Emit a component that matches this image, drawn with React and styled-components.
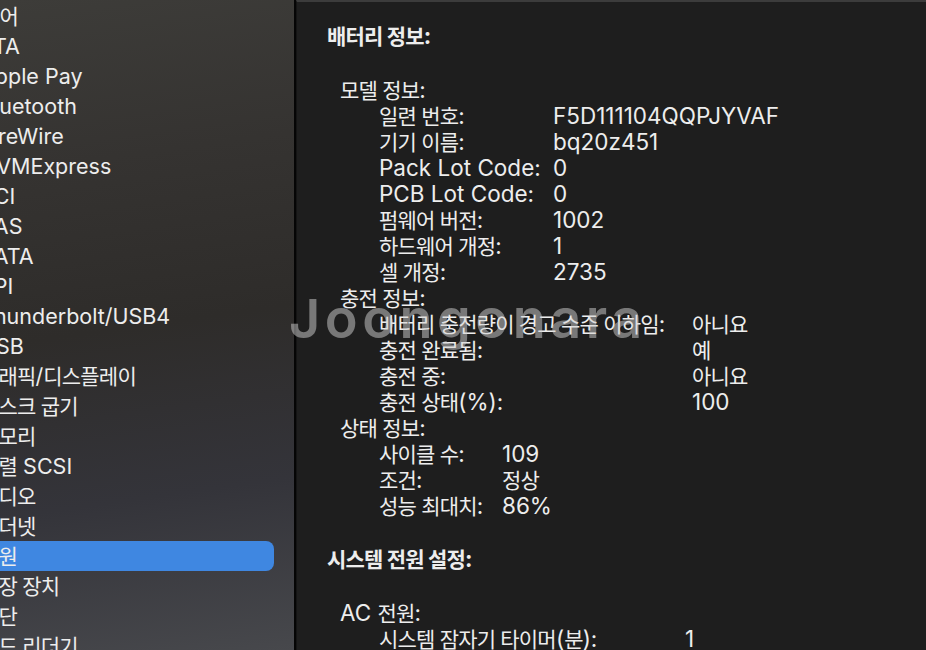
import React from "react";
import styled, { createGlobalStyle } from "styled-components";

const GlobalStyle = createGlobalStyle`
  html, body { margin: 0; padding: 0; background: #1e1e1e; }
  body { font-family: Inter, "Noto Sans CJK KR", sans-serif; -webkit-font-smoothing: antialiased; }
  * { box-sizing: border-box; }
`;

const Screen = styled.div`
  position: relative;
  display: flex;
  width: 926px;
  height: 650px;
  overflow: hidden;
  font-family: Inter, "Noto Sans CJK KR", sans-serif;
`;

/* Hangul runs: larger glyphs on a tighter advance, as in the macOS Korean font */
const Hangul = styled.span`
  font-size: 21px;
  letter-spacing: -0.8px;
`;

const HANGUL_RUN = /([\u1100-\u11FF\u3130-\u318F\uAC00-\uD7A3]+(?:\s+[\u1100-\u11FF\u3130-\u318F\uAC00-\uD7A3]+)*)/;

function Mixed({ text }) {
  return text
    .split(HANGUL_RUN)
    .map((part, i) => (i % 2 ? <Hangul key={i}>{part}</Hangul> : part));
}

const Sidebar = styled.nav`
  flex: 0 0 296px;
  padding: 1px 20px 0 0;
  overflow: hidden;
  background: linear-gradient(172deg, #3d3c39 0%, #353331 25%, #2e2c2a 50%, #34343a 75%, #47484c 100%);
  border-right: 2px solid #050505;
`;

const SideList = styled.ul`
  list-style: none;
  margin: 0 0 0 -70px;
  padding: 0;
`;

const SideItem = styled.li`
  height: 30px;
  line-height: 30px;
  font-size: 21.5px;
  color: #ededed;
  white-space: nowrap;
  overflow: hidden;
  padding-left: ${(p) => (p.$header ? 14 : 50)}px;
  border-radius: 8px;
  background: ${(p) => (p.$selected ? "#3f87e1" : "transparent")};
`;

const Panel = styled.main`
  flex: 1;
  background: #1e1e1e;
  border-top: 2px solid #3c3c3c;
  border-left: 1px solid #141414;
  padding: 22px 0 0 30px;
  color: #ededed;
  font-size: 22.5px;
  line-height: 26px;
`;

const Section = styled.section`
  & + & { margin-top: 28px; }
`;

const SectionTitle = styled.h2`
  height: 26px;
  margin: -1px 0 28px;
  font-size: 22.5px;
  font-weight: 700;
  line-height: 26px;
  white-space: nowrap;
`;

const Group = styled.div`
  padding-left: 13px;
`;

const GroupTitle = styled.div`
  height: 26px;
  white-space: nowrap;
`;

const Rows = styled.dl`
  display: grid;
  grid-template-columns: ${(p) => p.$labelWidth}px auto;
  grid-auto-rows: 26px;
  margin: 0;
  padding-left: 39px;
`;

const Label = styled.dt`
  white-space: nowrap;
`;

const Value = styled.dd`
  margin: 0;
  white-space: nowrap;
`;

const Watermark = styled.div`
  position: absolute;
  left: 289px;
  top: 292px;
  font-family: Inter, sans-serif;
  font-size: 54px;
  font-weight: 600;
  letter-spacing: 4.5px;
  line-height: 1;
  color: rgba(210, 210, 210, 0.5);
  pointer-events: none;
`;

const sidebarItems = [
  { name: "하드웨어", header: true },
  { name: "ATA" },
  { name: "Apple Pay" },
  { name: "Bluetooth" },
  { name: "FireWire" },
  { name: "NVMExpress" },
  { name: "PCI" },
  { name: "SAS" },
  { name: "SATA" },
  { name: "SPI" },
  { name: "Thunderbolt/USB4" },
  { name: "USB" },
  { name: "그래픽/디스플레이" },
  { name: "디스크 굽기" },
  { name: "메모리" },
  { name: "병렬 SCSI" },
  { name: "오디오" },
  { name: "이더넷" },
  { name: "전원", selected: true },
  { name: "저장 장치" },
  { name: "진단" },
  { name: "카드 리더기" },
];

const sections = [
  {
    title: "배터리 정보:",
    groups: [
      {
        title: "모델 정보:",
        labelWidth: 174,
        rows: [
          ["일련 번호:", "F5D111104QQPJYVAF"],
          ["기기 이름:", "bq20z451"],
          ["Pack Lot Code:", "0"],
          ["PCB Lot Code:", "0"],
          ["펌웨어 버전:", "1002"],
          ["하드웨어 개정:", "1"],
          ["셀 개정:", "2735"],
        ],
      },
      {
        title: "충전 정보:",
        labelWidth: 313,
        rows: [
          ["배터리 충전량이 경고 수준 이하임:", "아니요"],
          ["충전 완료됨:", "예"],
          ["충전 중:", "아니요"],
          ["충전 상태(%):", "100"],
        ],
      },
      {
        title: "상태 정보:",
        labelWidth: 123,
        rows: [
          ["사이클 수:", "109"],
          ["조건:", "정상"],
          ["성능 최대치:", "86%"],
        ],
      },
    ],
  },
  {
    title: "시스템 전원 설정:",
    groups: [
      {
        title: "AC 전원:",
        labelWidth: 306,
        rows: [["시스템 잠자기 타이머(분):", "1"]],
      },
    ],
  },
];

export default function App() {
  return (
    <>
      <GlobalStyle />
      <Screen>
        <Sidebar>
          <SideList>
            {sidebarItems.map((it) => (
              <SideItem key={it.name} $header={it.header} $selected={it.selected}>
                <Mixed text={it.name} />
              </SideItem>
            ))}
          </SideList>
        </Sidebar>
        <Panel>
          {sections.map((s) => (
            <Section key={s.title}>
              <SectionTitle>
                <Mixed text={s.title} />
              </SectionTitle>
              {s.groups.map((g) => (
                <Group key={g.title}>
                  <GroupTitle>
                    <Mixed text={g.title} />
                  </GroupTitle>
                  <Rows $labelWidth={g.labelWidth}>
                    {g.rows.map(([l, v]) => (
                      <React.Fragment key={l}>
                        <Label>
                          <Mixed text={l} />
                        </Label>
                        <Value>
                          <Mixed text={v} />
                        </Value>
                      </React.Fragment>
                    ))}
                  </Rows>
                </Group>
              ))}
            </Section>
          ))}
        </Panel>
        <Watermark>Joongonara</Watermark>
      </Screen>
    </>
  );
}
